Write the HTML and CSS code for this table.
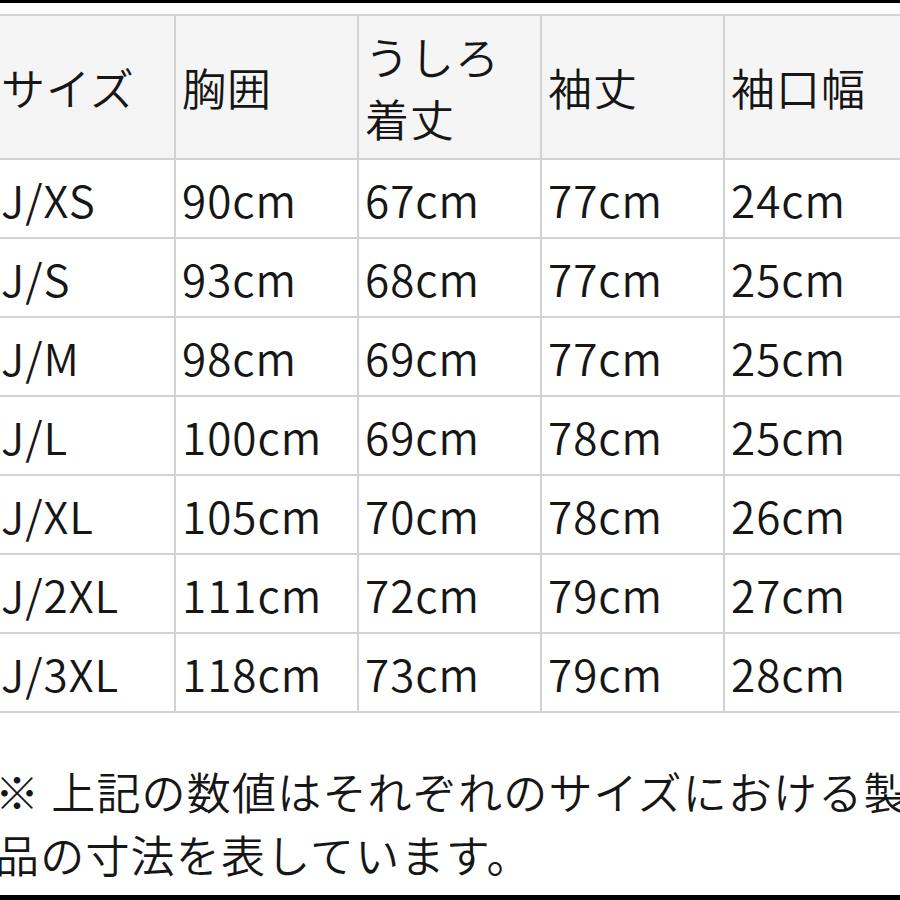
FILE: index.html
```html
<!DOCTYPE html>
<html lang="ja">
<head>
<meta charset="utf-8">
<title>サイズ表</title>
<link rel="stylesheet" href="styles.css">
</head>
<body>
<div class="frame">
  <table class="size-table">
    <thead>
      <tr class="head-row">
        <th>サイズ</th>
        <th>胸囲</th>
        <th>うしろ<br>着丈</th>
        <th>袖丈</th>
        <th>袖口幅</th>
      </tr>
    </thead>
    <tbody>
      <tr><td>J/XS</td><td>90cm</td><td>67cm</td><td>77cm</td><td>24cm</td></tr>
      <tr><td>J/S</td><td>93cm</td><td>68cm</td><td>77cm</td><td>25cm</td></tr>
      <tr><td>J/M</td><td>98cm</td><td>69cm</td><td>77cm</td><td>25cm</td></tr>
      <tr><td>J/L</td><td>100cm</td><td>69cm</td><td>78cm</td><td>25cm</td></tr>
      <tr><td>J/XL</td><td>105cm</td><td>70cm</td><td>78cm</td><td>26cm</td></tr>
      <tr><td>J/2XL</td><td>111cm</td><td>72cm</td><td>79cm</td><td>27cm</td></tr>
      <tr><td>J/3XL</td><td>118cm</td><td>73cm</td><td>79cm</td><td>28cm</td></tr>
    </tbody>
  </table>
  <p class="note">※ 上記の数値はそれぞれのサイズにおける製<br>品の寸法を表しています。</p>
</div>
</body>
</html>
```
FILE: styles.css
```css
html, body {
  margin: 0;
  padding: 0;
  background: #fff;
}
body {
  width: 900px;
  height: 900px;
  overflow: hidden;
  font-family: "Noto Sans CJK JP", "Noto Sans", sans-serif;
  color: #161616;
}
.frame {
  box-sizing: border-box;
  height: 900px;
  border-top: 3px solid #000;
  border-bottom: 5px solid #000;
  padding-top: 11px;
  overflow: hidden;
}
.size-table {
  border-collapse: collapse;
  table-layout: fixed;
  width: 917px;
  margin-left: -9px;
  font-size: 44px;
  line-height: 62px;
  font-weight: 350;
  letter-spacing: 1px;
}
.size-table th,
.size-table td {
  border: 2px solid #d2d2d2;
  padding: 0 0 0 6px;
  text-align: left;
  vertical-align: middle;
  font-weight: 350;
  white-space: nowrap;
}
.size-table th:first-child,
.size-table td:first-child {
  padding-left: 8px;
}
.head-row {
  height: 144px;
  background: #f5f5f5;
}
.size-table tbody tr {
  height: 79px;
}
.note {
  margin: 47px 0 0 -5px;
  font-size: 44px;
  line-height: 63px;
  font-weight: 350;
  letter-spacing: 1.2px;
  white-space: nowrap;
}
```
